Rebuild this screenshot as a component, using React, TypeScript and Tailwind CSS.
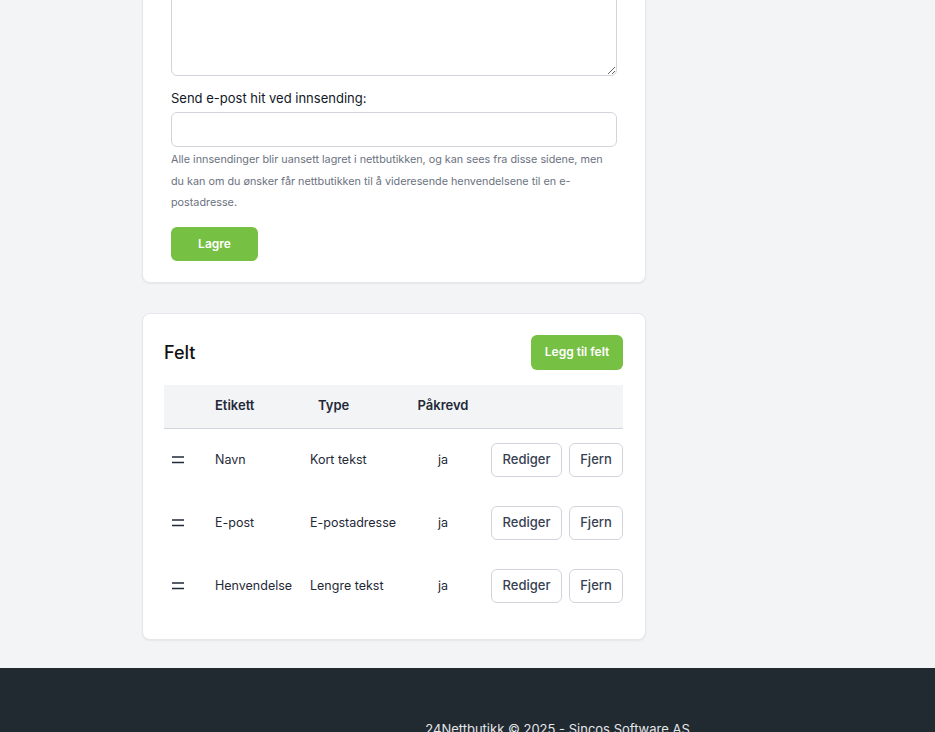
import React from 'react';

const fields = [
  { label: 'Navn', type: 'Kort tekst', required: 'ja' },
  { label: 'E-post', type: 'E-postadresse', required: 'ja' },
  { label: 'Henvendelse', type: 'Lengre tekst', required: 'ja' },
];

function DragHandle() {
  return (
    <svg width="12" height="8" viewBox="0 0 12 8" className="block">
      <line x1="0" y1="1" x2="12" y2="1" stroke="#1f2937" strokeWidth="1.5" />
      <line x1="0" y1="6.5" x2="12" y2="6.5" stroke="#1f2937" strokeWidth="1.5" />
    </svg>
  );
}

export default function App() {
  return (
    <div className="min-h-screen bg-[#f3f4f6] flex flex-col overflow-hidden" style={{ fontFamily: 'Inter, "Noto Sans", sans-serif' }}>
      <div className="pl-[142px] w-full">

        {/* Form settings card (scrolled) */}
        <div className="-mt-[60px] w-[504px] bg-white rounded-lg border border-[#e5e7eb] shadow-[0_1px_2px_rgba(0,0,0,0.06)] px-[28px] pb-[21px]">
          <textarea className="block w-full h-[135px] rounded-md border border-[#d1d5db] bg-white" />

          <label className="block mt-[12px] mb-[4px] text-[13px] leading-[20px] font-normal text-[#111827]">
            Send e-post hit ved innsending:
          </label>
          <input className="block w-full h-[35px] rounded-md border border-[#d1d5db] bg-white" />
          <p className="mt-[2px] text-[10.8px] leading-[21.5px] text-[#6b7280]">
            Alle innsendinger blir uansett lagret i nettbutikken, og kan sees fra disse sidene, men du kan om du ønsker får nettbutikken til å videresende henvendelsene til en e-postadresse.
          </p>
          <button className="mt-[13px] w-[87px] h-[34px] rounded-md bg-[#76c044] text-white text-[12px] font-semibold">
            Lagre
          </button>
        </div>

        {/* Fields card */}
        <div className="mt-[30px] w-[504px] bg-white rounded-lg border border-[#e5e7eb] shadow-[0_1px_2px_rgba(0,0,0,0.06)] pl-[21px] pr-[22px] pt-[21px] pb-[21px]">
          <div className="flex items-center justify-between">
            <h2 className="text-[18px] font-medium text-[#111]">Felt</h2>
            <button className="w-[92px] h-[35px] rounded-md bg-[#76c044] text-white text-[12px] font-semibold">
              Legg til felt
            </button>
          </div>

          <div className="mt-[15px]">
            <div className="flex items-center h-[44px] bg-[#f3f4f6] border-b border-[#d1d5db] text-[13px] font-semibold text-[#1f2937]">
              <div className="w-[51px]" />
              <div className="w-[95px]">Etikett</div>
              <div className="w-[100px] pl-[8px]">Type</div>
              <div className="w-[66px] text-center">Påkrevd</div>
              <div className="flex-1" />
            </div>

            {fields.map((f) => (
              <div key={f.label} className="flex items-center h-[63px] text-[12.5px] text-[#1f2937]">
                <div className="w-[51px] pl-[8px]">
                  <DragHandle />
                </div>
                <div className="w-[95px]">{f.label}</div>
                <div className="w-[100px]">{f.type}</div>
                <div className="w-[66px] text-center">{f.required}</div>
                <div className="flex-1 flex justify-end gap-[7px]">
                  <button className="w-[71px] h-[34px] rounded-md border border-[#d1d5db] bg-white text-[13px] font-medium text-[#374151]">
                    Rediger
                  </button>
                  <button className="w-[54px] h-[34px] rounded-md border border-[#d1d5db] bg-white text-[13px] font-medium text-[#374151]">
                    Fjern
                  </button>
                </div>
              </div>
            ))}
          </div>
        </div>
      </div>

      {/* Footer */}
      <footer className="mt-[28px] bg-[#212a31] pt-[51px] pb-[40px] flex justify-center pl-[180px]">
        <p className="text-[13px] leading-[20px] text-[#e5e7eb]">24Nettbutikk © 2025 - Sincos Software AS</p>
      </footer>
    </div>
  );
}
